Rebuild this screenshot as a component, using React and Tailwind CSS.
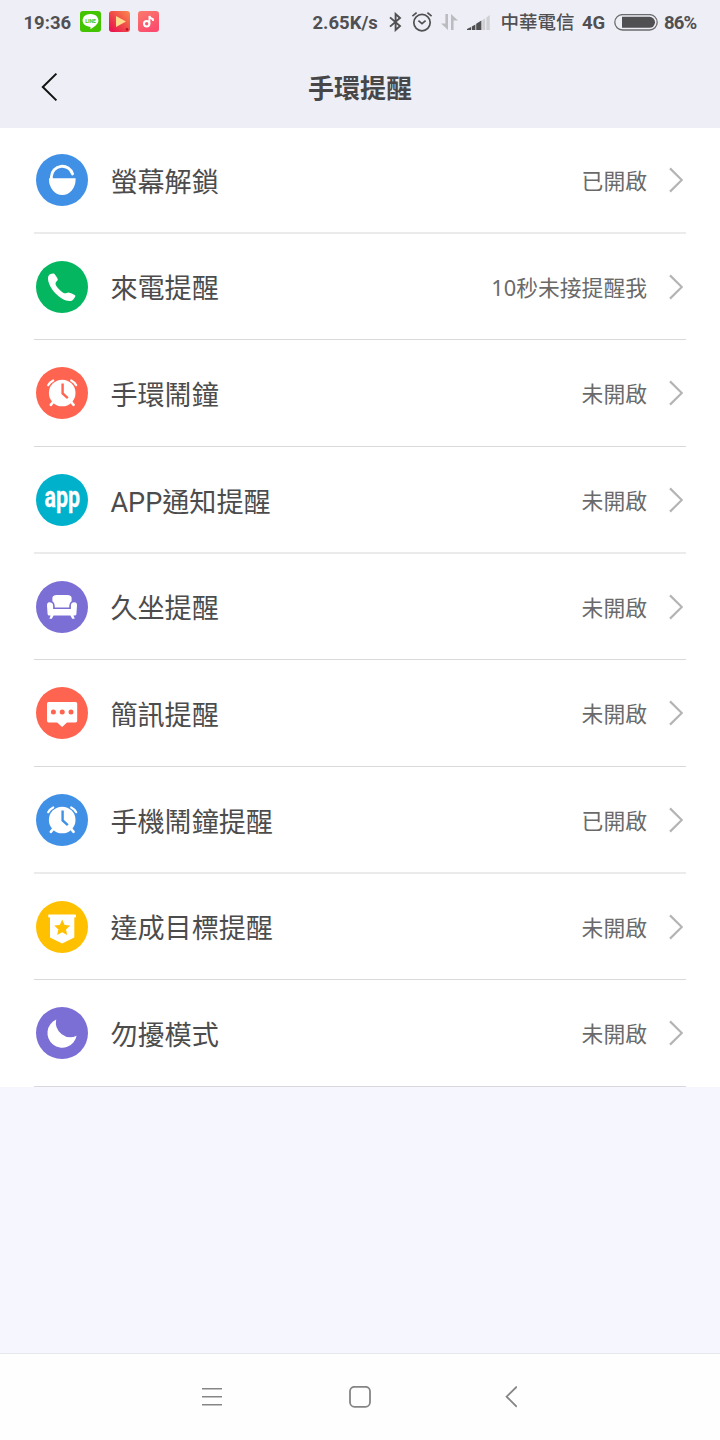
import React from 'react';

const Badge = ({ color, children }) => (
  <svg className="w-[52px] h-[52px] shrink-0 overflow-visible" viewBox="0 0 52 52" fill="white">
    <circle cx="26" cy="26" r="26" fill={color} />
    {children}
  </svg>
);

const UnlockGlyph = () => (
  <>
    <path d="M13 24.2H39.6V25.6A13.3 15.4 0 0 1 13 25.6Z" />
    <path d="M15.4 25V22.5A10.8 10.6 0 0 1 36.6 20" fill="none" stroke="white" strokeWidth="2.8" strokeLinecap="round" />
  </>
);

const PhoneGlyph = () => (
  <path d="M12.9 14.2C13.8 13.2 16.6 12.1 17.8 12.6C18.8 13 21.8 17.3 21.8 18.6C21.8 20 19.6 20.8 19.5 22.4C19.4 25.2 25.9 31.8 28.8 32.2C30.2 32.4 31.2 31.3 32.4 31.4C34 31.5 38.8 33.6 39.3 34.6C39.7 35.8 37.6 38.6 36.2 39.4C33.4 40.8 28.6 39.4 25 37C19.6 33.4 14.2 27.4 12.4 20.6C11.8 18 11.8 15.5 12.9 14.2Z" />
);

const ClockGlyph = ({ color }) => (
  <>
    <circle cx="26.2" cy="26" r="13.3" />
    <path d="M17.5 34.6L14.8 37.8M34.9 34.6L37.6 37.8" stroke="white" strokeWidth="2.6" strokeLinecap="round" />
    <path d="M12.2 18.2Q13.9 15 17.2 13.4M40.2 18.2Q38.5 15 35.2 13.4" fill="none" stroke="white" strokeWidth="2.2" strokeLinecap="round" />
    <path d="M26.6 16.4V26.4L31.8 31.2" fill="none" stroke={color} strokeWidth="2.4" />
  </>
);

const AppGlyph = () => (
  <g transform="translate(8.4 33) scale(0.74 1)">
    <text fontSize="29" fontWeight="700" stroke="white" strokeWidth="0.3">app</text>
  </g>
);

const SofaGlyph = () => (
  <>
    <path d="M16.4 20.2V16.6Q17 14.2 20.6 14H31.4Q35 14.2 35.6 16.6V20.2Q33.2 21.6 33.2 26.4H18.8Q18.8 21.6 16.4 20.2Z" />
    <path d="M13.2 21.2Q16.9 21.2 17.1 24.4V28H34.9V24.4Q35.1 21.2 38.4 21.2Q41.2 21.4 41 24.4L40.4 33.2Q40.2 34.6 38.6 34.6H37.4L38.8 37.8H36.2L34.4 34.6H17.6L15.8 37.8H13.4L14.6 34.6H13.4Q11.8 34.6 11.6 33.2L11 24.4Q11 21.4 13.2 21.2Z" />
  </>
);

const MessageGlyph = ({ color }) => (
  <>
    <path d="M12.6 15H39.6Q41.2 15 41.2 16.6V33.8Q41.2 35.4 39.6 35.4H31L26.1 40L21.2 35.4H12.6Q11 35.4 11 33.8V16.6Q11 15 12.6 15Z" />
    <g fill={color}>
      <circle cx="17.4" cy="25" r="2.5" />
      <circle cx="26.2" cy="25" r="2.5" />
      <circle cx="35" cy="25" r="2.5" />
    </g>
  </>
);

const GoalGlyph = ({ color }) => (
  <>
    <path d="M13 13.6H39.2Q40 13.6 40 14.6V15.4Q40 16.4 39.2 16.4H38.3V36.6L26.1 42.6L14 36.6V16.4H13Q12.2 16.4 12.2 15.4V14.6Q12.2 13.6 13 13.6Z" />
    <path d="M26.2 18.6L28.6 24L34.2 24.6L30 28.4L31.2 34L26.2 31.2L21.2 34L22.4 28.4L18.2 24.6L23.8 24Z" fill={color} />
  </>
);

const MoonGlyph = () => (
  <path d="M20.2 12.6A14.7 14.7 0 1 0 40.6 28.8A14.6 14.6 0 0 1 20.2 12.6Z" />
);

const reminders = [
  { label: '螢幕解鎖', status: '已開啟', color: '#4090e6', Glyph: UnlockGlyph },
  { label: '來電提醒', status: '10秒未接提醒我', color: '#04b65f', Glyph: PhoneGlyph },
  { label: '手環鬧鐘', status: '未開啟', color: '#ff6450', Glyph: ClockGlyph },
  { label: 'APP通知提醒', status: '未開啟', color: '#00b1cc', Glyph: AppGlyph },
  { label: '久坐提醒', status: '未開啟', color: '#7b6fd6', Glyph: SofaGlyph },
  { label: '簡訊提醒', status: '未開啟', color: '#ff6450', Glyph: MessageGlyph },
  { label: '手機鬧鐘提醒', status: '已開啟', color: '#4090e6', Glyph: ClockGlyph },
  { label: '達成目標提醒', status: '未開啟', color: '#ffc000', Glyph: GoalGlyph },
  { label: '勿擾模式', status: '未開啟', color: '#7b6fd6', Glyph: MoonGlyph },
];

const StatusBar = () => (
  <div className="h-[44px] flex items-center pl-[23.5px] text-[18.5px] font-bold text-[#505052] whitespace-nowrap">
    <span className="w-[56.7px] pt-[3px]">19:36</span>

    {/* Notification icons */}
    <div className="flex gap-2 w-[232.3px] -mt-px">
      <svg className="w-[21px] h-[21px]" viewBox="0 0 21 21">
        <rect width="21" height="21" rx="3" fill="#43c400" />
        <path d="M10.5 3C15 3 18.4 5.8 18.4 9.5C18.4 13 14.6 15.6 10.4 18.2C10.6 17 10.8 16 9.8 15.8C5.6 15.4 2.6 12.9 2.6 9.5C2.6 5.8 6 3 10.5 3Z" fill="white" />
        <text x="5.2" y="11.5" fontSize="5" fontWeight="700" fill="#43c400" textLength="10.8" lengthAdjust="spacingAndGlyphs">LINE</text>
      </svg>
      <svg className="w-[21px] h-[21px]" viewBox="0 0 21 21">
        <defs>
          <linearGradient id="play" x1="0" y1="1" x2="1" y2="0">
            <stop offset="0" stopColor="#e80a50" />
            <stop offset="0.5" stopColor="#f04a48" />
            <stop offset="1" stopColor="#fb8a50" />
          </linearGradient>
        </defs>
        <rect width="21" height="21" rx="3" fill="url(#play)" />
        <path d="M7 5L17 10.6L7 16Z" fill="#ffdb8c" />
        <circle cx="18" cy="18.4" r="1.3" fill="#b91528" />
      </svg>
      <svg className="w-[21px] h-[21px]" viewBox="0 0 21 21">
        <defs>
          <linearGradient id="music" x1="0" y1="0" x2="0.5" y2="1">
            <stop offset="0" stopColor="#fb7b6c" />
            <stop offset="1" stopColor="#fb4d6e" />
          </linearGradient>
        </defs>
        <rect width="21" height="21" rx="3" fill="url(#music)" />
        <circle cx="8.7" cy="12.7" r="2.7" fill="none" stroke="white" strokeWidth="2" />
        <path d="M11.4 12.7V5Q12 7.4 15 8.2V10" fill="none" stroke="white" strokeWidth="1.8" />
      </svg>
    </div>

    <span className="w-[76.5px] pt-[3px]">2.65K/s</span>
    <svg className="w-[13px] h-[20px]" viewBox="0 0 13 20" fill="none" stroke="#505052" strokeWidth="1.9">
      <path d="M1 5.4L11 14L6.6 18V2L11 6L1 14.6" />
    </svg>
    <svg className="w-[22px] h-[22px] ml-[9px]" viewBox="0 0 22 22" fill="none" stroke="#505052" strokeWidth="1.7">
      <circle cx="11" cy="11.6" r="8.2" />
      <path d="M7.4 9.6L11 12.6L14.6 9.6M1.4 5.2L5.6 1.6M20.6 5.2L16.4 1.6" />
    </svg>
    <svg className="w-[17px] h-[16px] ml-[8px]" viewBox="0 0 17 16" fill="#bcbcc0">
      <path d="M4.4 0H7V16L0 9.6H4.4Z" />
      <path d="M10 0L17 6.4H12.6V16H10Z" />
    </svg>
    <svg className="w-[24px] h-[16px] ml-[9px]" viewBox="0 0 24 16">
      <path d="M0 16V15L4 13V16ZM4.8 16V12.4L8.4 10.6V16Z" fill="#505052" />
      <path d="M9.2 16V9.8L14.4 6.6V16Z" fill="#505052" />
      <path d="M15.2 6.2L18.2 4.2V16H15.2ZM19.4 3.6L22.8 1V16H19.4Z" fill="#d0d0d4" />
    </svg>
    <span className="w-[81.5px] ml-[9.5px] pt-[3px] font-medium">中華電信</span>
    <span className="w-[32px] pt-[3px]">4G</span>
    <svg className="w-[44px] h-[17px]" viewBox="0 0 44 17">
      <rect x="0.8" y="0.6" width="42.4" height="15.4" rx="7.7" fill="none" stroke="#6a6a6c" strokeWidth="1.3" />
      <path d="M8 2.8H35.5A5.5 5.5 0 0 1 35.5 13.8H8Z" fill="#505052" />
    </svg>
    <span className="ml-[6px] pt-[3px] tracking-[-0.8px]">86%</span>
  </div>
);

const ReminderRow = ({ label, status, color, Glyph }) => (
  <li className="group h-[106.667px] pl-[34px] pr-[34px] flex">
    <div className="flex-1 flex items-center pt-[0.4px] group-[:nth-child(3n+1)]:pt-[1.4px] pl-[2px] pr-[3px] border-b border-[#d9d9db] group-[:nth-child(3n+1)]:border-b-2 group-[:nth-child(3n+1)]:border-[#ebebec]">
      <Badge color={color}>
        <Glyph color={color} />
      </Badge>
      <span className="ml-[22.4px] flex-1 pt-[6px] text-[27.1px] text-[#4c4c4c]">{label}</span>
      <span className="pt-[3px] text-[21.8px] text-[#6a6a6a] font-['Noto_Sans','Noto_Sans_CJK_TC',sans-serif]">{status}</span>
      <svg className="w-[14px] h-[26px] ml-[22px]" viewBox="0 0 14 26" fill="none" stroke="#b4b4b4" strokeWidth="2.2">
        <path d="M1 1.4L12.8 13L1 24.6" />
      </svg>
    </div>
  </li>
);

const NavigationBar = () => (
  <nav className="h-[87px] bg-[#fefefe] border-t border-[#e6e7eb] flex items-center pl-[202px]">
    <svg className="w-[20px] h-[20px]" viewBox="0 0 20 20" stroke="#858585" strokeWidth="1.6">
      <path d="M0 1.7H20M0 9.7H20M0 17.7H20" />
    </svg>
    <svg className="w-[22px] h-[22px] ml-[127px]" viewBox="0 0 22 22" fill="none" stroke="#858585" strokeWidth="1.8">
      <rect x="1" y="0.8" width="20" height="20" rx="4.5" />
    </svg>
    <svg className="w-[12px] h-[22px] ml-[134px]" viewBox="0 0 12 22" fill="none" stroke="#858585" strokeWidth="1.8">
      <path d="M11.8 0.6L1.6 10.7L11.8 20.8" />
    </svg>
  </nav>
);

const App = () => {
  return (
    <div className="w-[720px] h-[1440px] bg-[#f6f7fe] flex flex-col overflow-hidden font-[Roboto,'Noto_Sans_CJK_TC',sans-serif]">
      <header className="relative z-10 h-[128px] shrink-0 bg-[#eeeef7]">
        <StatusBar />
        <div className="h-[84px] grid grid-cols-[60px_1fr_60px] items-center">
          <svg className="w-[18px] h-[30px] ml-[41px] mt-px" viewBox="0 0 18 30" fill="none" stroke="#111" strokeWidth="2">
            <path d="M15.4 1.6L1.8 15L15.4 28.4" />
          </svg>
          <h1 className="pt-[7px] text-center text-[26px] font-bold text-[#47474a]">手環提醒</h1>
        </div>
      </header>

      <ul className="-mt-px shrink-0 bg-white">
        {reminders.map((item) => (
          <ReminderRow key={item.label} {...item} />
        ))}
      </ul>

      <div className="flex-1" />
      <NavigationBar />
    </div>
  );
};

export default App;
